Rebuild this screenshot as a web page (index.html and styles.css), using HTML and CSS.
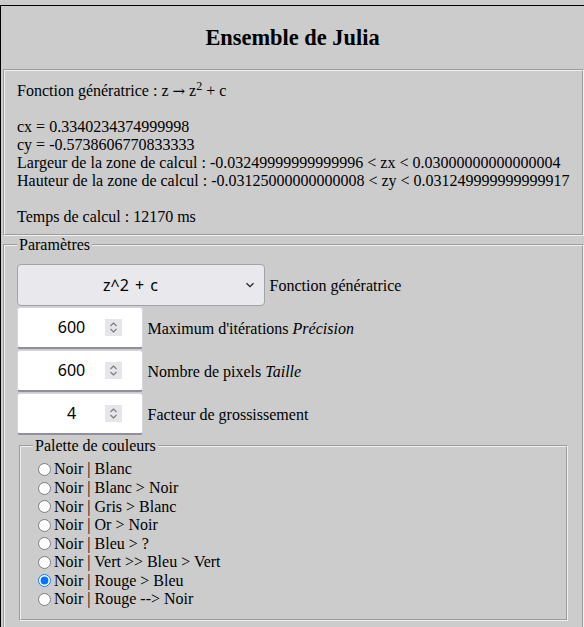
FILE: index.html
```html
<!DOCTYPE html>
<html lang="fr">
<head>
<meta charset="utf-8">
<title>Ensemble de Julia</title>
<link rel="stylesheet" href="styles.css">
</head>
<body>
<div class="page">
  <header class="header">
    <h1 class="title">Ensemble de Julia</h1>
  </header>

  <fieldset class="info">
    <div class="info-group">
      <p class="line">Fonction génératrice : z <span class="arrow">→</span> z<sup class="sup">2</sup> + c</p>
    </div>
    <div class="info-group">
      <p class="line">cx = 0.3340234374999998</p>
      <p class="line">cy = -0.5738606770833333</p>
      <p class="line">Largeur de la zone de calcul : -0.03249999999999996 &lt; zx &lt; 0.03000000000000004</p>
      <p class="line">Hauteur de la zone de calcul : -0.03125000000000008 &lt; zy &lt; 0.031249999999999917</p>
    </div>
    <div class="info-group">
      <p class="line">Temps de calcul : 12170 ms</p>
    </div>
  </fieldset>

  <fieldset class="params">
    <legend class="legend">Paramètres</legend>
    <div class="controls">
      <div class="row">
        <div class="select-box">
          <select class="select">
            <option>z^2 + c</option>
          </select>
          <svg class="chevron" width="10" height="6" viewBox="0 0 10 6"><path d="M1.5 1.2 L5 4.6 L8.5 1.2" fill="none" stroke="#222" stroke-width="1.3"/></svg>
        </div>
        <span class="label">Fonction génératrice</span>
      </div>
      <div class="row">
        <div class="num-box">
          <input class="num" type="text" value="600">
          <span class="spin"><svg width="17" height="17" viewBox="0 0 17 17"><path d="M5.5 7 L8.5 4 L11.5 7" fill="none" stroke="#7a7a7a" stroke-width="1.1"/><path d="M5.5 10 L8.5 13 L11.5 10" fill="none" stroke="#7a7a7a" stroke-width="1.1"/></svg></span>
        </div>
        <span class="label">Maximum d'itérations <em>Précision</em></span>
      </div>
      <div class="row">
        <div class="num-box">
          <input class="num" type="text" value="600">
          <span class="spin"><svg width="17" height="17" viewBox="0 0 17 17"><path d="M5.5 7 L8.5 4 L11.5 7" fill="none" stroke="#7a7a7a" stroke-width="1.1"/><path d="M5.5 10 L8.5 13 L11.5 10" fill="none" stroke="#7a7a7a" stroke-width="1.1"/></svg></span>
        </div>
        <span class="label">Nombre de pixels <em>Taille</em></span>
      </div>
      <div class="row">
        <div class="num-box">
          <input class="num" type="text" value="4">
          <span class="spin"><svg width="17" height="17" viewBox="0 0 17 17"><path d="M5.5 7 L8.5 4 L11.5 7" fill="none" stroke="#7a7a7a" stroke-width="1.1"/><path d="M5.5 10 L8.5 13 L11.5 10" fill="none" stroke="#7a7a7a" stroke-width="1.1"/></svg></span>
        </div>
        <span class="label">Facteur de grossissement</span>
      </div>

      <fieldset class="palette">
        <legend class="legend">Palette de couleurs</legend>
        <label class="radio-row"><input class="radio" type="radio" name="pal"><span class="radio-text">Noir | Blanc</span></label>
        <label class="radio-row"><input class="radio" type="radio" name="pal"><span class="radio-text">Noir | Blanc &gt; Noir</span></label>
        <label class="radio-row"><input class="radio" type="radio" name="pal"><span class="radio-text">Noir | Gris &gt; Blanc</span></label>
        <label class="radio-row"><input class="radio" type="radio" name="pal"><span class="radio-text">Noir | Or &gt; Noir</span></label>
        <label class="radio-row"><input class="radio" type="radio" name="pal"><span class="radio-text">Noir | Bleu &gt; ?</span></label>
        <label class="radio-row"><input class="radio" type="radio" name="pal"><span class="radio-text">Noir | Vert &gt;&gt; Bleu &gt; Vert</span></label>
        <label class="radio-row"><input class="radio" type="radio" name="pal" checked><span class="radio-text">Noir | Rouge &gt; Bleu</span></label>
        <label class="radio-row"><input class="radio" type="radio" name="pal"><span class="radio-text">Noir | Rouge --&gt; Noir</span></label>
      </fieldset>
    </div>
  </fieldset>
</div>
</body>
</html>
```

FILE: styles.css
```css
html, body {
  margin: 0;
  padding: 0;
  background: #cccccc;
}

body {
  font-family: "Liberation Serif", "Times New Roman", serif;
  font-size: 16px;
  color: #000;
  overflow: hidden;
}

.page {
  margin-top: 5px;
  border-top: 1px solid #000;
  border-left: 1px solid #000;
  background: #cccccc;
}

.header {
  padding: 19px 0 18px;
}

.title {
  margin: 0;
  font-size: 22.4px;
  font-weight: bold;
  text-align: center;
  line-height: 26px;
}

.info {
  margin: 0 0 0 2px;
  padding: 11px 12px 8px;
  border: 2px groove #f0f0f0;
}

.info-group + .info-group {
  margin-top: 18px;
}

.line {
  margin: 0;
  line-height: 18px;
}

.arrow {
  font-family: "DejaVu Serif", serif;
  font-size: 15px;
}

.sup {
  font-size: 12px;
  line-height: 0;
  vertical-align: 6px;
}

.params {
  margin: 0 0 0 2px;
  padding: 5.6px 12px 10px;
  border: 2px groove #f0f0f0;
}

.legend {
  padding: 0 2px;
  font-family: "Liberation Serif", "Times New Roman", serif;
  font-size: 16px;
}

.controls {
  display: flex;
  flex-direction: column;
  gap: 1px;
  margin-top: 4px;
}

.row {
  display: flex;
  align-items: center;
  height: 42px;
}

.label {
  margin-left: 4.5px;
  padding-top: 2px;
  white-space: nowrap;
}

.select-box {
  display: flex;
  align-items: center;
  box-sizing: border-box;
  width: 248px;
  height: 42px;
  border: 1px solid #a2a2aa;
  border-radius: 4px;
  background: #e9e9ed;
}

.select {
  flex: 1;
  -webkit-appearance: none;
  appearance: none;
  border: none;
  background: transparent;
  height: 100%;
  font-family: "Noto Sans", "Open Sans", sans-serif;
  font-size: 16px;
  word-spacing: 2px;
  text-align: center;
  text-align-last: center;
  color: #000;
  padding: 0 0 0 2px;
  outline: none;
}

.chevron {
  margin: 0 9px 0 4px;
}

.num-box {
  display: flex;
  align-items: center;
  box-sizing: border-box;
  width: 126px;
  height: 42px;
  background: #fff;
  border: 1px solid #d6d6dc;
  border-bottom: 2px solid #8f8f9d;
  border-radius: 3px;
}

.num {
  flex: 1;
  min-width: 0;
  border: none;
  background: transparent;
  outline: none;
  padding: 0 0 0 20px;
  font-family: "Noto Sans", "Open Sans", sans-serif;
  font-size: 16px;
  text-align: center;
  color: #000;
}

.spin {
  display: flex;
  width: 17px;
  height: 17px;
  margin-right: 20px;
  background: #e6e6ea;
}

.palette {
  margin: 1px 2px 0;
  padding: 5.6px 12px 10px;
  border: 2px groove #f0f0f0;
}

.radio-row {
  display: flex;
  align-items: center;
  height: 18.57px;
  font-family: "Liberation Serif", "Times New Roman", serif;
  font-size: 16px;
  white-space: nowrap;
}

.radio {
  width: 13px;
  height: 13px;
  margin: 0 3px 0 5px;
  flex: none;
}

.radio-text {
  font-family: "Liberation Serif", "Times New Roman", serif;
  line-height: 18px;
}
```
